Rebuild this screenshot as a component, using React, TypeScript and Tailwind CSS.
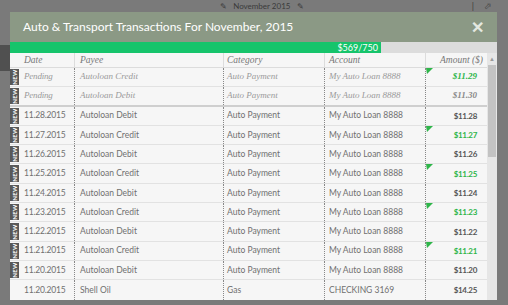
type Txn = {
  date: string;
  payee: string;
  category: string;
  account: string;
  amount: string;
  credit?: boolean;
  pending?: boolean;
  isNew?: boolean;
};

const rows: Txn[] = [
  { date: "Pending", payee: "Autoloan Credit", category: "Auto Payment", account: "My Auto Loan 8888", amount: "$11.29", credit: true, pending: true, isNew: true },
  { date: "Pending", payee: "Autoloan Debit", category: "Auto Payment", account: "My Auto Loan 8888", amount: "$11.30", pending: true, isNew: true },
  { date: "11.28.2015", payee: "Autoloan Debit", category: "Auto Payment", account: "My Auto Loan 8888", amount: "$11.28", isNew: true },
  { date: "11.27.2015", payee: "Autoloan Credit", category: "Auto Payment", account: "My Auto Loan 8888", amount: "$11.27", credit: true, isNew: true },
  { date: "11.26.2015", payee: "Autoloan Debit", category: "Auto Payment", account: "My Auto Loan 8888", amount: "$11.26", isNew: true },
  { date: "11.25.2015", payee: "Autoloan Credit", category: "Auto Payment", account: "My Auto Loan 8888", amount: "$11.25", credit: true, isNew: true },
  { date: "11.24.2015", payee: "Autoloan Debit", category: "Auto Payment", account: "My Auto Loan 8888", amount: "$11.24", isNew: true },
  { date: "11.23.2015", payee: "Autoloan Credit", category: "Auto Payment", account: "My Auto Loan 8888", amount: "$11.23", credit: true, isNew: true },
  { date: "11.22.2015", payee: "Autoloan Debit", category: "Auto Payment", account: "My Auto Loan 8888", amount: "$11.22", isNew: true },
  { date: "11.21.2015", payee: "Autoloan Credit", category: "Auto Payment", account: "My Auto Loan 8888", amount: "$11.21", credit: true, isNew: true },
  { date: "11.20.2015", payee: "Autoloan Debit", category: "Auto Payment", account: "My Auto Loan 8888", amount: "$11.20", isNew: true },
  { date: "11.20.2015", payee: "Shell Oil", category: "Gas", account: "CHECKING 3169", amount: "$14.25" },
];

const cols = "grid grid-cols-[11px_53px_149px_101px_101px_62px]";

function Flag() {
  return (
    <svg className="absolute left-0 top-0" width="7" height="6" viewBox="0 0 7 6">
      <polygon points="0,0 7,0 1,6" fill="#2fb54a" />
    </svg>
  );
}

function Row({ t, last }: { t: Txn; last: boolean }) {
  const txt = t.pending
    ? "font-['Liberation_Serif'] italic text-[9px] text-[#9a9a9a]"
    : "font-['Lato'] text-[8.5px] text-[#707070]";
  const sep = t.date === "Pending" && t.payee === "Autoloan Debit"
    ? "border-b-2 border-[#cfcfcf]"
    : last ? "" : "border-b border-[#e2e2e2]";
  return (
    <div className={`${cols} h-[19.3px] bg-[#f6f6f6] ${sep}`}>
      <div className="flex items-stretch py-[1px]">
        {t.isNew && (
          <div className="w-[9px] bg-[#585858] flex items-center justify-center">
            <span className="-rotate-90 text-[6px] font-bold font-['Lato'] text-white leading-none tracking-[0.3px]">
              NEW
            </span>
          </div>
        )}
      </div>
      <div className={`flex items-center pl-[3px] whitespace-nowrap tracking-[-0.2px] ${txt}`}>{t.date}</div>
      <div className={`flex items-center pl-[5px] border-l border-dotted border-[#888] ${txt}`}>{t.payee}</div>
      <div className={`flex items-center pl-[3px] border-l border-dotted border-[#888] ${txt}`}>{t.category}</div>
      <div className={`flex items-center pl-[4px] border-l border-dotted border-[#888] ${txt}`}>{t.account}</div>
      <div
        className={`relative flex items-center justify-end pr-[10px] border-l border-dotted border-[#888] font-bold ${
          t.pending ? "font-['Liberation_Serif'] italic text-[9px]" : "font-['Lato'] text-[8px] tracking-[-0.3px]"
        } ${t.credit ? "text-[#2fb54a]" : t.pending ? "text-[#8a8a8a]" : "text-[#555]"}`}
      >
        {t.credit && <Flag />}
        {t.amount}
      </div>
    </div>
  );
}

export default function App() {
  return (
    <div className="relative w-[508px] h-[305px] overflow-hidden bg-[#7a7a7a] font-['Lato']">
      <div className="h-[12px] overflow-hidden flex items-start">
        <div className="ml-[220px] mt-[2px] text-[8px] text-[#3a3a3a] leading-none whitespace-nowrap">
          ✎&nbsp;&nbsp;&nbsp;November 2015&nbsp;&nbsp;&nbsp;✎
        </div>
        <div className="ml-auto mr-[16px] mt-[1px] flex gap-[10px] text-[9px] text-[#3a3a3a] leading-none">
          <span>|</span>
          <span>⬀</span>
        </div>
      </div>
      <div className="absolute left-0 top-[45px] w-[10px] h-[26px] bg-[#505050]" />
      <div className="ml-[10px] w-[487px] bg-[#f6f6f6]">
        <div className="h-[30px] bg-[#8b9985] flex items-center pl-[13px] pr-[13px]">
          <div className="text-[12px] text-white">
            Auto &amp; Transport Transactions For November, 2015
          </div>
          <div className="ml-auto text-[#e3e8e0] text-[16px] font-bold leading-none">✕</div>
        </div>
        <div className="h-[11px] bg-[#dcdcdc] flex">
          <div className="w-[371px] bg-[#16c46b] flex items-center justify-end pr-[3px] text-[9px] text-white leading-none">
            $569/750
          </div>
        </div>
        <div className="flex">
          <div className="w-[477px]">
            <div className={`${cols} h-[15px] bg-[#f6f6f6] border-b border-[#dcdcdc] font-['Liberation_Serif'] italic text-[9.5px] text-[#777]`}>
              <div />
              <div className="flex items-center pl-[3px]">Date</div>
              <div className="flex items-center pl-[5px] border-l border-[#dcdcdc]">Payee</div>
              <div className="flex items-center pl-[3px] border-l border-[#dcdcdc]">Category</div>
              <div className="flex items-center pl-[4px] border-l border-[#dcdcdc]">Account</div>
              <div className="flex items-center justify-end pr-[4px] border-l border-[#dcdcdc]">Amount ($)</div>
            </div>
            {rows.map((t, i) => (
              <Row key={i} t={t} last={i === rows.length - 1} />
            ))}
          </div>
          <div className="w-[10px] bg-[#e6e6e6] flex flex-col items-center">
            <div className="h-[12px] flex items-center text-[6px] text-[#999] leading-none">▲</div>
            <div className="w-[8px] h-[92px] bg-[#c3c3c3]" />
          </div>
        </div>
      </div>
    </div>
  );
}
